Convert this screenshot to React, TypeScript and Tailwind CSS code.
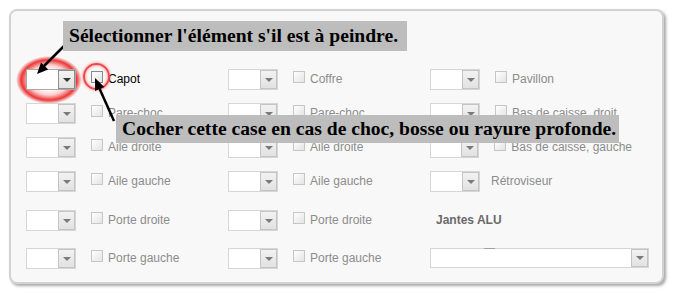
import React from "react";

type CellProps = {
  label?: string;
  active?: boolean;
  check?: boolean;
};

function Select({ active = false, wide = false }: { active?: boolean; wide?: boolean }) {
  return (
    <div
      className={
        "relative z-10 flex justify-end bg-white border " +
        (wide ? "w-[219px] h-[20px] " : "w-[50px] h-[21px] ") +
        (active ? "border-[#a8a8a8]" : "border-[#d6d6d6]")
      }
    >
      <div
        className={
          "w-[17px] h-full flex items-center justify-center border bg-gradient-to-b from-[#f2f2f2] to-[#e2e2e2] " +
          (active ? "border-[#8f8f8f]" : "border-[#c4c4c4]")
        }
      >
        <div
          className={
            "w-0 h-0 border-l-[4px] border-r-[4px] border-t-[4px] border-l-transparent border-r-transparent " +
            (active ? "border-t-[#333]" : "border-t-[#7a7a7a]")
          }
        />
      </div>
    </div>
  );
}

function Cell({ label, active = false, check = true }: CellProps) {
  return (
    <div className="relative w-[202px] flex items-start shrink-0">
      {active && (
        <div className="pointer-events-none absolute left-[-10px] top-[-13px] w-[66px] h-[48px] rounded-full bg-[radial-gradient(closest-side,rgba(255,255,255,0.9)_40%,rgba(255,190,190,0.7)_62%,rgba(236,45,45,0.95)_84%,rgba(255,110,110,0)_100%)]" />
      )}
      <Select active={active} />
      {check ? (
        <>
          <div
            className={
              "ml-[15px] mt-[2px] w-[12px] h-[12px] border bg-gradient-to-br from-white to-[#e4e4e4] " +
              (active ? "border-[#8a8a8a]" : "border-[#c6c6c6]")
            }
          />
          <span
            className={
              "ml-[5px] text-[12px] leading-[21px] whitespace-nowrap " +
              (active ? "text-black" : "text-[#8c8c8c]")
            }
          >
            {label}
          </span>
        </>
      ) : (
        <span className="ml-[11px] text-[12px] leading-[21px] text-[#8c8c8c] whitespace-nowrap">{label}</span>
      )}
    </div>
  );
}

export default function App() {
  return (
    <div className="relative w-[679px] h-[297px] bg-white overflow-hidden pt-[9px] pl-[9px] font-['Liberation_Sans',Arial,sans-serif]">
      <div className="w-[655px] h-[275px] rounded-[8px] border-2 border-[#d2d2d2] bg-[#f8f8f8] shadow-[2px_2px_3px_rgba(0,0,0,0.35)] pl-[15px] pt-[58px]">
        <div className="flex h-[34px]">
          <Cell label="Capot" active />
          <Cell label="Coffre" />
          <Cell label="Pavillon" />
        </div>
        <div className="flex h-[34px]">
          <Cell label="Pare-choc" />
          <Cell label="Pare-choc" />
          <Cell label="Bas de caisse, droit" />
        </div>
        <div className="flex h-[34px]">
          <Cell label="Aile droite" />
          <Cell label="Aile droite" />
          <Cell label="Bas de caisse, gauche" />
        </div>
        <div className="flex h-[39px]">
          <Cell label="Aile gauche" />
          <Cell label="Aile gauche" />
          <Cell label="Rétroviseur" check={false} />
        </div>
        <div className="flex h-[38px]">
          <Cell label="Porte droite" />
          <Cell label="Porte droite" />
          <div className="w-[202px] pl-[6px] text-[12px] leading-[21px] font-bold text-[#6a6a6a]">Jantes ALU</div>
        </div>
        <div className="flex h-[21px]">
          <Cell label="Porte gauche" />
          <Cell label="Porte gauche" />
          <div className="w-[202px] relative">
            <Select wide />
            <div className="absolute z-20 left-[54px] top-[1px] w-[51px] h-[17px] bg-white" />
            <div className="absolute z-20 left-[54px] top-0 w-[11px] h-[1px] bg-[#a0a0a0]" />
          </div>
        </div>
      </div>

      {/* red highlight around checkbox */}
      <div className="pointer-events-none absolute z-30 left-[83px] top-[63px] w-[27px] h-[27px] rounded-full border-2 border-[#f04848] shadow-[0_0_3px_#ff7070,inset_0_0_3px_#ff7070]" />

      {/* arrows */}
      <svg className="pointer-events-none absolute z-30 left-0 top-0" width="679" height="297" viewBox="0 0 679 297">
        <line x1="64" y1="46" x2="44" y2="66" stroke="#000" strokeWidth="2.5" />
        <polygon points="37,74 48.2,69.5 41,62.6" fill="#000" />
        <line x1="114" y1="121" x2="99.7" y2="89" stroke="#000" strokeWidth="2.5" />
        <polygon points="95,78 104.3,87 95.1,91" fill="#000" />
      </svg>

      {/* callouts */}
      <div className="absolute z-40 left-[63px] top-[21px] w-[344px] h-[30px] bg-[#bdbdbd] pl-[6px] flex items-center font-['Liberation_Serif',serif] font-bold text-[19.6px] text-black whitespace-nowrap">
        Sélectionner l'élément s'il est à peindre.
      </div>
      <div className="absolute z-40 left-[116px] top-[115px] w-[503px] h-[28px] bg-[#bdbdbd] pl-[6px] flex items-center font-['Liberation_Serif',serif] font-bold text-[19.6px] text-black whitespace-nowrap">
        Cocher cette case en cas de choc, bosse ou rayure profonde.
      </div>
    </div>
  );
}
